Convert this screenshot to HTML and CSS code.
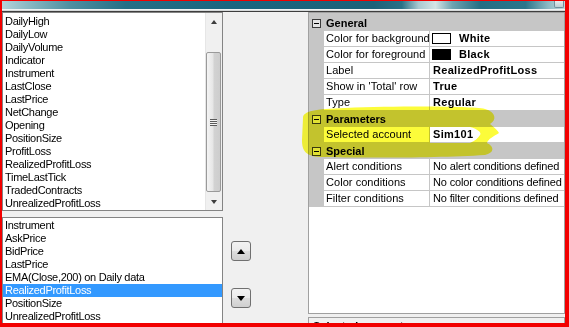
FILE: index.html
```html
<!DOCTYPE html>
<html>
<head>
<meta charset="utf-8">
<title>Columns</title>
<link rel="stylesheet" href="styles.css">
</head>
<body>
<div class="screen">
  <div class="titlebar"><div class="winbtn"></div></div>
  <div class="sep"></div>
  <div class="main">
    <div class="leftcol">
      <div class="listbox upper">
        <ul class="items">
          <li>DailyHigh</li>
          <li>DailyLow</li>
          <li>DailyVolume</li>
          <li>Indicator</li>
          <li>Instrument</li>
          <li>LastClose</li>
          <li>LastPrice</li>
          <li>NetChange</li>
          <li>Opening</li>
          <li>PositionSize</li>
          <li>ProfitLoss</li>
          <li>RealizedProfitLoss</li>
          <li>TimeLastTick</li>
          <li>TradedContracts</li>
          <li>UnrealizedProfitLoss</li>
        </ul>
        <div class="vscroll">
          <div class="sbtn"><span class="arrow-up"></span></div>
          <div class="strack"><div class="thumb"><span class="grip"></span></div></div>
          <div class="sbtn"><span class="arrow-down"></span></div>
        </div>
      </div>
      <div class="listbox lower">
        <ul class="items">
          <li>Instrument</li>
          <li>AskPrice</li>
          <li>BidPrice</li>
          <li>LastPrice</li>
          <li>EMA(Close,200) on Daily data</li>
          <li class="sel">RealizedProfitLoss</li>
          <li>PositionSize</li>
          <li>UnrealizedProfitLoss</li>
        </ul>
      </div>
    </div>
    <div class="midcol">
      <div class="movebtn"><span class="big-up"></span></div>
      <div class="movebtn"><span class="big-down"></span></div>
    </div>
    <div class="rightcol">
      <div class="pgrid">
        <div class="cat"><span class="expander"></span><span>General</span></div>
        <div class="prop"><span class="margin"></span><span class="name">Color for background</span><span class="value"><span class="swatch sw-white"></span><b>White</b></span></div>
        <div class="prop"><span class="margin"></span><span class="name">Color for foreground</span><span class="value"><span class="swatch sw-black"></span><b>Black</b></span></div>
        <div class="prop"><span class="margin"></span><span class="name">Label</span><span class="value"><b>RealizedProfitLoss</b></span></div>
        <div class="prop"><span class="margin"></span><span class="name">Show in 'Total' row</span><span class="value"><b>True</b></span></div>
        <div class="prop"><span class="margin"></span><span class="name">Type</span><span class="value"><b>Regular</b></span></div>
        <div class="cat"><span class="expander"></span><span>Parameters</span></div>
        <div class="prop"><span class="margin"></span><span class="name">Selected account</span><span class="value"><b>Sim101</b></span></div>
        <div class="cat"><span class="expander"></span><span>Special</span></div>
        <div class="prop"><span class="margin"></span><span class="name">Alert conditions</span><span class="value">No alert conditions defined</span></div>
        <div class="prop"><span class="margin"></span><span class="name">Color conditions</span><span class="value">No color conditions defined</span></div>
        <div class="prop"><span class="margin"></span><span class="name">Filter conditions</span><span class="value">No filter conditions defined</span></div>
      </div>
      <div class="desc"><b>Selected account</b></div>
    </div>
  </div>
  <svg class="marker" width="569" height="327" viewBox="0 0 569 327">
    <path fill-rule="evenodd" d="M303,118 C303,111 315,109 345,108 C400,106 470,106 485,109 C496,112 497,120 490,124 C495,128 498,131 499,133 C494,136 488,139 487,143 C495,147 494,153 485,155 C440,158 360,158 320,157 C305,156 302,150 302,140 Z M430,127 L470,127 C478,129 482,133 480,135 C478,138 475,141 470,143 L430,143 Z"/>
  </svg>
</div>
</body>
</html>
```
FILE: styles.css
```css
* {
  box-sizing: border-box;
  margin: 0;
  padding: 0;
}

html, body {
  width: 569px;
  height: 327px;
  overflow: hidden;
  background: #f0f0f0;
}

body {
  font-family: "Liberation Sans", Arial, sans-serif;
  font-size: 11px;
  color: #000;
}

.screen {
  position: relative;
  width: 569px;
  height: 327px;
  border-style: solid;
  border-color: #f20000;
  border-width: 1px 4px 4px 2px;
  display: flex;
  flex-direction: column;
  background: #f0f0f0;
  overflow: hidden;
}

.titlebar {
  height: 8px;
  flex: none;
  display: flex;
  justify-content: flex-end;
  padding-right: 1px;
  background: linear-gradient(90deg, #b4d2d8 0%, #8fbcc6 4%, #4f90a1 12%, #256f86 22%, #1b6680 40%, #1c6279 66%, #2a7187 71%, #a9c9d0 74%, #d5e4e6 77%, #6ea3b0 80%, #236e84 85%, #2b768b 93%, #8cb9c3 97%, #c2d9de 100%);
}

.winbtn {
  width: 10px;
  height: 7px;
  border: 1px solid #6f8f9c;
  border-top: none;
  border-radius: 0 0 2px 2px;
  background: linear-gradient(#e4ecee, #bccfd5);
}

.sep {
  height: 3px;
  flex: none;
  background: linear-gradient(#f2f4f4 0 1px, #d5d8d9 1px 2px, #3e3e3e 2px 3px);
}

.main {
  flex: 1;
  display: flex;
  min-height: 0;
}

/* left lists */
.leftcol {
  width: 221px;
  flex: none;
  display: flex;
  flex-direction: column;
  gap: 6px;
}

.listbox {
  background: #fff;
  border: 1px solid #848484;
  display: flex;
  overflow: hidden;
}

.upper {
  height: 199px;
  flex: none;
}

.lower {
  flex: 1;
  padding-top: 1px;
  border-bottom: none;
}

.items {
  list-style: none;
  flex: 1;
  min-width: 0;
}

.upper .items {
  padding-top: 2px;
}

.items li {
  height: 13px;
  line-height: 13px;
  padding-left: 2px;
  letter-spacing: -0.3px;
  white-space: nowrap;
}

.items li.sel {
  background: #3399ff;
  color: #fff;
}

.vscroll {
  width: 17px;
  flex: none;
  display: flex;
  flex-direction: column;
  background: #f0f0f0;
  border-left: 1px solid #e6e6e6;
}

.sbtn {
  height: 17px;
  flex: none;
  display: flex;
  align-items: center;
  justify-content: center;
}

.arrow-up {
  width: 0;
  height: 0;
  border-left: 3.5px solid transparent;
  border-right: 3.5px solid transparent;
  border-bottom: 4px solid #3c3c3c;
}

.arrow-down {
  width: 0;
  height: 0;
  border-left: 3.5px solid transparent;
  border-right: 3.5px solid transparent;
  border-top: 4px solid #3c3c3c;
}

.strack {
  flex: 1;
  padding-top: 22px;
}

.thumb {
  height: 140px;
  margin: 0 1px 0 0;
  border: 1px solid #9a9a9a;
  border-radius: 2px;
  background: linear-gradient(90deg, #f4f4f4 0%, #e6e6e6 45%, #d2d2d2 55%, #cdcdcd 100%);
  display: flex;
  align-items: center;
  justify-content: center;
}

.grip {
  width: 7px;
  height: 7px;
  background: repeating-linear-gradient(#5a5a5a 0 1px, #f2f2f2 1px 2px);
}

/* middle buttons */
.midcol {
  width: 85px;
  flex: none;
  display: flex;
  flex-direction: column;
  align-items: flex-start;
  gap: 27px;
  padding: 229px 0 0 8px;
}

.movebtn {
  width: 20px;
  height: 20px;
  border: 1px solid #707070;
  border-radius: 3px;
  background: linear-gradient(#f2f2f2 0%, #ebebeb 48%, #dddddd 52%, #cfcfcf 100%);
  display: flex;
  align-items: center;
  justify-content: center;
}

.big-up {
  width: 0;
  height: 0;
  border-left: 4.5px solid transparent;
  border-right: 4.5px solid transparent;
  border-bottom: 5px solid #000;
}

.big-down {
  width: 0;
  height: 0;
  border-left: 4.5px solid transparent;
  border-right: 4.5px solid transparent;
  border-top: 5px solid #000;
}

/* property grid */
.rightcol {
  flex: 1;
  min-width: 0;
  display: flex;
  flex-direction: column;
  gap: 3px;
}

.pgrid {
  height: 302px;
  flex: none;
  border: 1px solid #a0a0a0;
  padding-top: 2px;
  background: linear-gradient(#c6c6c6 0 2px, #fff 2px);
  overflow: hidden;
}

.cat {
  height: 16px;
  display: flex;
  align-items: center;
  padding-left: 3px;
  background: #c6c6c6;
  font-weight: bold;
  white-space: nowrap;
}

.expander {
  position: relative;
  width: 9px;
  height: 9px;
  margin-right: 5px;
  border: 1px solid #3a3a3a;
  background: #e4e4e4;
}

.expander::after {
  content: "";
  position: absolute;
  left: 1px;
  top: 3px;
  width: 5px;
  height: 1px;
  background: #000;
}

.prop {
  height: 16px;
  display: grid;
  grid-template-columns: 15px 106px 1fr;
  border-bottom: 1px solid #c6c6c6;
  line-height: 15px;
  white-space: nowrap;
}

.margin {
  background: #c6c6c6;
}

.name {
  padding-left: 2px;
  border-right: 1px solid #c6c6c6;
  overflow: hidden;
  letter-spacing: 0.05px;
}

.value {
  display: flex;
  align-items: center;
  padding-left: 3px;
  overflow: hidden;
  letter-spacing: -0.15px;
}

.value b {
  letter-spacing: 0.3px;
}

.swatch {
  width: 19px;
  height: 11px;
  margin: 0 8px 0 -1px;
  border: 1px solid #000;
}

.sw-white {
  background: #fff;
}

.sw-black {
  background: #000;
}

.desc {
  flex: 1;
  border: 1px solid #a0a0a0;
  border-bottom: none;
  padding: 2px 4px 0;
  line-height: 13px;
  background: #f0f0f0;
  white-space: nowrap;
}

/* yellow marker annotation */
.marker {
  position: absolute;
  left: -2px;
  top: -1px;
  pointer-events: none;
  mix-blend-mode: multiply;
  fill: #fcfc3a;
}
```
